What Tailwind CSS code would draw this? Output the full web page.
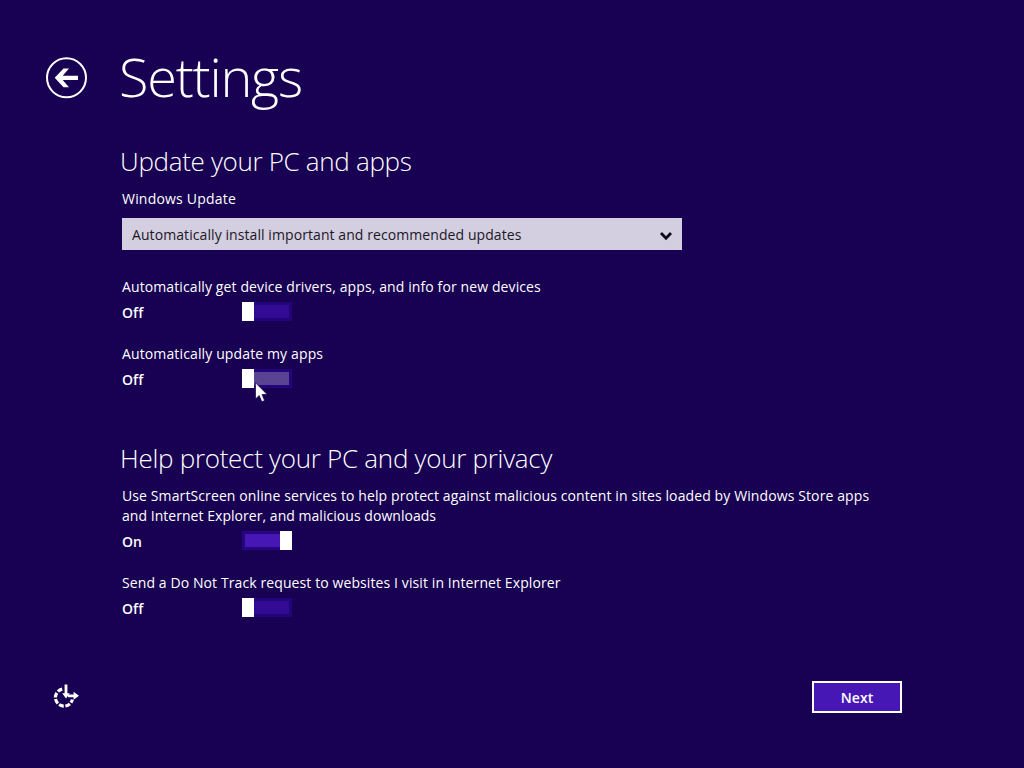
<!DOCTYPE html>
<html lang="en">
<head>
    <meta charset="UTF-8">
    <meta name="viewport" content="width=device-width, initial-scale=1.0">
    <title>Settings</title>
    <script src="https://cdn.jsdelivr.net/npm/@tailwindcss/browser@4"></script>
</head>
<body class="w-[1024px] h-[768px] overflow-hidden bg-[#180052] text-white font-['Open_Sans',sans-serif] text-[14px] leading-5 tracking-[0.1px] whitespace-nowrap">

    <!-- Header -->
    <header class="flex items-center h-[147px] pl-[45px]">
        <button class="block w-[42px] h-[42px] mt-[8px]" aria-label="Back">
            <svg class="block" width="42" height="42" viewBox="0 0 42 42" fill="none">
                <circle cx="21.5" cy="20.8" r="19.5" stroke="#fff" stroke-width="2"/>
                <path d="M9.7 20.8 18.5 11.5H24L17.7 18.7H33V23.1H17.7L24 30.2H18.5Z" fill="#fff"/>
            </svg>
        </button>
        <h1 class="ml-[32px] mt-[4px] text-[54px] leading-[70px] font-light tracking-[-1.2px]">Settings</h1>
    </header>

    <main class="flex flex-col items-start h-[534px] pl-[122px]">
        <!-- Update your PC and apps -->
        <h2 class="-ml-[2px] text-[26px] leading-[28px] font-light tracking-[-0.32px]">Update your PC and apps</h2>
        <label class="mt-[14px] tracking-[0.2px]">Windows Update</label>
        <div class="flex items-center justify-between w-[560px] h-[32px] mt-[9px] pl-[10px] pr-[9px] bg-[#d3cee0] text-[#1c1826]">
            <span class="pt-[2px] tracking-[0.08px]">Automatically install important and recommended updates</span>
            <svg class="mt-[3px]" width="14" height="10" viewBox="0 0 14 10" fill="none">
                <path d="M2 2 7 7.2 12 2" stroke="#110b1c" stroke-width="2.8"/>
            </svg>
        </div>

        <p class="mt-[27px] tracking-[0.11px]">Automatically get device drivers, apps, and info for new devices</p>
        <div class="flex h-5 mt-[5px]">
            <span class="w-[120px] pt-px font-semibold">Off</span>
            <div class="flex items-center w-[50px] h-[19px]">
                <div class="w-[12px] h-[19px] bg-white"></div>
                <div class="w-[38px] h-[19px] p-[3px] pl-0 bg-[#240479]">
                    <div class="h-full bg-[#320a93]"></div>
                </div>
            </div>
        </div>

        <p class="mt-[22px] tracking-[0.13px]">Automatically update my apps</p>
        <div class="relative flex h-5 mt-[5px]">
            <span class="w-[120px] pt-px font-semibold">Off</span>
            <div class="flex items-center w-[50px] h-[19px]">
                <div class="w-[12px] h-[19px] bg-white"></div>
                <div class="w-[38px] h-[19px] p-[3px] pl-0 bg-[#240479]">
                    <div class="h-full bg-[#594392]"></div>
                </div>
            </div>
            <!-- Mouse pointer -->
            <svg class="absolute left-[133px] top-[13px]" width="13" height="21" viewBox="0 0 13 21">
                <path d="M.5.8V17L4.2 13.5 6.8 19.8 9.6 18.6 7 12.5H12.2Z" fill="#fff" stroke="#120038" stroke-width=".7"/>
            </svg>
        </div>

        <!-- Help protect your PC and your privacy -->
        <h2 class="mt-[55px] -ml-[2px] text-[26px] leading-[28px] font-light tracking-[-0.28px]">Help protect your PC and your privacy</h2>
        <p class="mt-[14px] tracking-[0.11px]">Use SmartScreen online services to help protect against malicious content in sites loaded by Windows Store apps</p>
        <p class="tracking-[0.04px]">and Internet Explorer, and malicious downloads</p>
        <div class="flex h-5 mt-[5px]">
            <span class="w-[120px] pt-px font-semibold">On</span>
            <div class="flex items-center w-[50px] h-[19px]">
                <div class="w-[38px] h-[19px] p-[3px] pr-0 bg-[#260580]">
                    <div class="h-full bg-[#4617b4]"></div>
                </div>
                <div class="w-[12px] h-[19px] bg-white"></div>
            </div>
        </div>

        <p class="mt-[22px]">Send a Do Not Track request to websites I visit in Internet Explorer</p>
        <div class="flex h-5 mt-[5px]">
            <span class="w-[120px] pt-px font-semibold">Off</span>
            <div class="flex items-center w-[50px] h-[19px]">
                <div class="w-[12px] h-[19px] bg-white"></div>
                <div class="w-[38px] h-[19px] p-[3px] pl-0 bg-[#240479]">
                    <div class="h-full bg-[#320a93]"></div>
                </div>
            </div>
        </div>
    </main>

    <!-- Footer -->
    <footer class="flex items-center justify-between h-[32px] pl-[53px] pr-[122px]">
        <button class="block" aria-label="Ease of Access">
            <svg class="block" width="27" height="28" viewBox="0 0 27 28" fill="none">
                <path d="M9.2 6.1A8.6 8.6 0 1 0 19.4 16.5" stroke="#fff" stroke-width="3.2" stroke-dasharray="5 1.6"/>
                <path d="M13 1.5V13M15 12.8H21" stroke="#fff" stroke-width="2.8"/>
                <path d="M9.2 10.2H16.8L13 15.6ZM20.6 8.8 26 12.8 20.6 16.8Z" fill="#fff"/>
            </svg>
        </button>
        <button class="w-[90px] h-[32px] pt-px border-2 border-white bg-[#4617b4] font-semibold">Next</button>
    </footer>

</body>
</html>
